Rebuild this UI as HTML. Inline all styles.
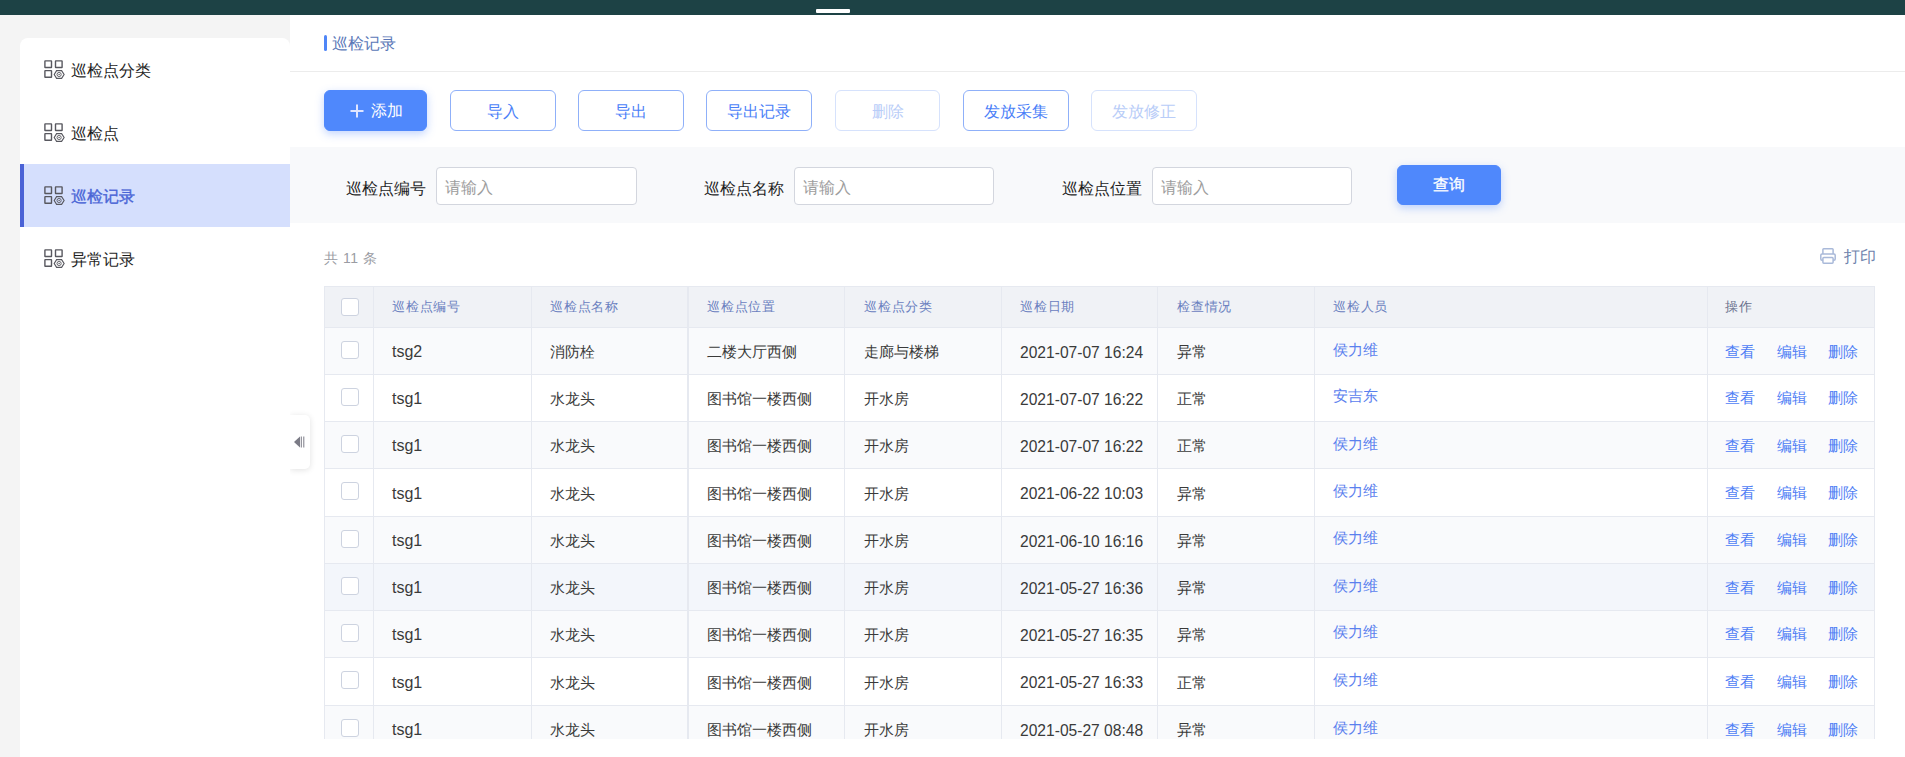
<!DOCTYPE html>
<html><head><meta charset="utf-8">
<style>
*{box-sizing:border-box;margin:0;padding:0}
html,body{width:1905px;height:757px;overflow:hidden;background:#f4f4f4;font-family:"Liberation Sans",sans-serif;color:#333}
.abs{position:absolute}
#top{left:0;top:0;width:1905px;height:15px;background:#1d4245}
#pill{left:816px;top:9px;width:34px;height:4px;border-radius:1px;background:#fff}
#side{left:20px;top:38px;width:270px;height:719px;background:#fff;border-radius:8px 8px 0 0}
.mi{position:absolute;left:0;width:270px;height:63px;font-size:16px;line-height:63px;color:#1f1f1f}
.mi .ic{position:absolute;left:24px;top:22px;width:21px;height:20px}
.mi span{position:absolute;left:51px;top:1px}
.mi.act{background:#d5dffd;color:#4a65d6;-webkit-text-stroke:0.35px #4a65d6}
.mi.act:before{content:"";position:absolute;left:0;top:0;width:4px;height:63px;background:#4a62d6}
#main{left:290px;top:15px;width:1615px;height:742px;background:#fff}
#ttl-bar{left:324px;top:35px;width:3px;height:16px;border-radius:2px;background:#4f86f7}
#ttl{left:332px;top:34px;font-size:16px;line-height:20px;color:#5b78b8}
#div{left:290px;top:71px;width:1615px;height:1px;background:#ececec}
.btn{position:absolute;top:90px;height:41px;border-radius:6px;font-size:16px;line-height:39px;padding-top:1px;text-align:center;border:1px solid #8fb0f9;color:#4b7ff8;background:#fff}
.btn.dis{border-color:#d6e2fc;color:#b9cdf8}
.btn.pri{background:#4f88fc;border-color:#4f88fc;color:#fff;box-shadow:0 3px 8px rgba(79,136,252,.35)}
#search{left:290px;top:147px;width:1615px;height:76px;background:#f8f9fb}
.lbl{position:absolute;top:178.5px;font-size:16px;line-height:20px;color:#1f1f1f}
.inp{position:absolute;top:167px;width:201px;height:38px;border:1px solid #d3d6de;border-radius:4px;background:#fff;font-size:16px;line-height:36px;padding-left:8px;padding-top:2px;color:#9d9d9d}
#total{left:324px;top:247.5px;font-size:14px;line-height:20px;color:#9a9ca3;letter-spacing:0.5px;word-spacing:0}
#print{left:1820px;top:248px;width:16px;height:16px}
#printt{left:1844px;top:246.5px;font-size:16px;line-height:20px;color:#6f83ad}
.hl{left:324px;width:1551px;height:1px;background:#e6e9f0}
.vl{top:286px;height:453px;background:#e6e9f0}
.cb{position:absolute;left:341px;width:18px;height:18px;border:1px solid #cdd3e0;border-radius:3px;background:#fff}
.th{position:absolute;top:296.5px;font-size:13px;line-height:20px;color:#6a80bf;letter-spacing:0.8px}
.th.op{color:#69708c}
.td{position:absolute;font-size:15px;line-height:20px;color:#3a3a3a;white-space:nowrap}
.td.lat{font-size:16px}
.td.date{font-size:15.6px}
.td.nm{color:#5a80ee}
.td.lk{color:#4f7ef5}
#tab{left:290px;top:415px;width:20px;height:54px;background:#fff;border-radius:0 5px 5px 0;box-shadow:0 1px 6px rgba(0,0,0,.12);clip-path:inset(-12px -12px -12px 0)}
</style></head><body>
<div class="abs" id="top"></div>
<div class="abs" id="pill"></div>
<div class="abs" id="side">
  <div class="mi" style="top:0"><svg class="ic" viewBox="0 0 21 20"><g fill="none" stroke="#58585f" stroke-width="1.4"><rect x="0.9" y="0.9" width="6.6" height="6.6" rx="0.3"/><rect x="11.5" y="0.9" width="6.6" height="6.6" rx="0.3"/><rect x="0.9" y="10.6" width="6.6" height="6.6" rx="0.3"/></g><g fill="none" stroke="#58585f"><polygon stroke-width="1.15" points="10.2,14.5 12.6,10.6 17.6,10.6 20.1,14.5 17.6,18.4 12.6,18.4"/><circle cx="15.1" cy="14.5" r="2.1" stroke-width="0.9"/></g><circle cx="15.1" cy="14.5" r="0.75" fill="#58585f"/></svg><span>巡检点分类</span></div>
  <div class="mi" style="top:63px"><svg class="ic" viewBox="0 0 21 20"><g fill="none" stroke="#58585f" stroke-width="1.4"><rect x="0.9" y="0.9" width="6.6" height="6.6" rx="0.3"/><rect x="11.5" y="0.9" width="6.6" height="6.6" rx="0.3"/><rect x="0.9" y="10.6" width="6.6" height="6.6" rx="0.3"/></g><g fill="none" stroke="#58585f"><polygon stroke-width="1.15" points="10.2,14.5 12.6,10.6 17.6,10.6 20.1,14.5 17.6,18.4 12.6,18.4"/><circle cx="15.1" cy="14.5" r="2.1" stroke-width="0.9"/></g><circle cx="15.1" cy="14.5" r="0.75" fill="#58585f"/></svg><span>巡检点</span></div>
  <div class="mi act" style="top:126px"><svg class="ic" viewBox="0 0 21 20"><g fill="none" stroke="#58585f" stroke-width="1.4"><rect x="0.9" y="0.9" width="6.6" height="6.6" rx="0.3"/><rect x="11.5" y="0.9" width="6.6" height="6.6" rx="0.3"/><rect x="0.9" y="10.6" width="6.6" height="6.6" rx="0.3"/></g><g fill="none" stroke="#58585f"><polygon stroke-width="1.15" points="10.2,14.5 12.6,10.6 17.6,10.6 20.1,14.5 17.6,18.4 12.6,18.4"/><circle cx="15.1" cy="14.5" r="2.1" stroke-width="0.9"/></g><circle cx="15.1" cy="14.5" r="0.75" fill="#58585f"/></svg><span>巡检记录</span></div>
  <div class="mi" style="top:189px"><svg class="ic" viewBox="0 0 21 20"><g fill="none" stroke="#58585f" stroke-width="1.4"><rect x="0.9" y="0.9" width="6.6" height="6.6" rx="0.3"/><rect x="11.5" y="0.9" width="6.6" height="6.6" rx="0.3"/><rect x="0.9" y="10.6" width="6.6" height="6.6" rx="0.3"/></g><g fill="none" stroke="#58585f"><polygon stroke-width="1.15" points="10.2,14.5 12.6,10.6 17.6,10.6 20.1,14.5 17.6,18.4 12.6,18.4"/><circle cx="15.1" cy="14.5" r="2.1" stroke-width="0.9"/></g><circle cx="15.1" cy="14.5" r="0.75" fill="#58585f"/></svg><span>异常记录</span></div>
</div>
<div class="abs" id="main"></div>
<div class="abs" id="ttl-bar"></div>
<div class="abs" id="ttl">巡检记录</div>
<div class="abs" id="div"></div>
<div class="btn pri" style="left:324px;width:103px"><svg style="position:absolute;left:25px;top:13px" width="14" height="14" viewBox="0 0 14 14"><path d="M7 0.5V13.5M0.5 7H13.5" stroke="#dfe5ff" stroke-width="2"/></svg><span style="position:absolute;left:46px;top:0">添加</span></div>
<div class="btn" style="left:450px;width:106px">导入</div>
<div class="btn" style="left:578px;width:106px">导出</div>
<div class="btn" style="left:706px;width:106px">导出记录</div>
<div class="btn dis" style="left:835px;width:105px">删除</div>
<div class="btn" style="left:963px;width:106px">发放采集</div>
<div class="btn dis" style="left:1091px;width:106px">发放修正</div>
<div class="abs" id="search"></div>
<div class="lbl" style="left:346px">巡检点编号</div>
<div class="inp" style="left:436px">请输入</div>
<div class="lbl" style="left:704px">巡检点名称</div>
<div class="inp" style="left:794px;width:200px">请输入</div>
<div class="lbl" style="left:1062px">巡检点位置</div>
<div class="inp" style="left:1152px;width:200px">请输入</div>
<div class="btn pri" style="left:1397px;top:165px;width:104px;height:40px;line-height:38px;padding-top:0;-webkit-text-stroke:0.3px #fff">查询</div>
<div class="abs" id="total">共 11 条</div>
<svg class="abs" id="print" viewBox="0 0 16 16"><g fill="none" stroke="#a9b9d9" stroke-width="1.5"><path d="M2.9 6V1.6Q2.9 0.8 3.7 0.8H12.3Q13.1 0.8 13.1 1.6V6"/><rect x="0.8" y="6" width="14.4" height="6.2" rx="1.2"/><rect x="2.9" y="9.6" width="10.2" height="5.6" rx="0.9" fill="#fff"/></g></svg>
<div class="abs" id="printt">打印</div>
<!--TABLE-->
<div class="abs" style="left:324px;top:286px;width:1551px;height:453px;background:#fff"></div>
<div class="abs" style="left:324px;top:287px;width:1551px;height:40px;background:#f0f2f6"></div>
<div class="abs" style="left:324px;top:328px;width:1551px;height:46px;background:#f9fafc"></div>
<div class="abs" style="left:324px;top:422px;width:1551px;height:46px;background:#f9fafc"></div>
<div class="abs" style="left:324px;top:517px;width:1551px;height:46px;background:#f9fafc"></div>
<div class="abs" style="left:324px;top:564px;width:1551px;height:46px;background:#f3f6fb"></div>
<div class="abs" style="left:324px;top:611px;width:1551px;height:46px;background:#f9fafc"></div>
<div class="abs" style="left:324px;top:706px;width:1551px;height:33px;background:#f9fafc"></div>
<div class="abs hl" style="top:286px"></div>
<div class="abs hl" style="top:327px"></div>
<div class="abs hl" style="top:374px"></div>
<div class="abs hl" style="top:421px"></div>
<div class="abs hl" style="top:468px"></div>
<div class="abs hl" style="top:516px"></div>
<div class="abs hl" style="top:563px"></div>
<div class="abs hl" style="top:610px"></div>
<div class="abs hl" style="top:657px"></div>
<div class="abs hl" style="top:705px"></div>
<div class="abs vl" style="left:324px;width:1px"></div>
<div class="abs vl" style="left:373px;width:1px"></div>
<div class="abs vl" style="left:531px;width:1px"></div>
<div class="abs vl" style="left:687px;width:2px"></div>
<div class="abs vl" style="left:844px;width:1px"></div>
<div class="abs vl" style="left:1001px;width:1px"></div>
<div class="abs vl" style="left:1157px;width:1px"></div>
<div class="abs vl" style="left:1314px;width:1px"></div>
<div class="abs vl" style="left:1707px;width:1px"></div>
<div class="abs vl" style="left:1874px;width:1px"></div>
<div class="cb" style="top:298px"></div>
<div class="th" style="left:392px">巡检点编号</div>
<div class="th" style="left:550px">巡检点名称</div>
<div class="th" style="left:707px">巡检点位置</div>
<div class="th" style="left:864px">巡检点分类</div>
<div class="th" style="left:1020px">巡检日期</div>
<div class="th" style="left:1177px">检查情况</div>
<div class="th" style="left:1333px">巡检人员</div>
<div class="th op" style="left:1725px">操作</div>
<div class="cb" style="top:341px"></div>
<div class="td lat" style="left:392px;top:342.0px">tsg2</div>
<div class="td" style="left:550px;top:342.0px">消防栓</div>
<div class="td" style="left:707px;top:342.0px">二楼大厅西侧</div>
<div class="td" style="left:864px;top:342.0px">走廊与楼梯</div>
<div class="td date" style="left:1020px;top:342.5px">2021-07-07 16:24</div>
<div class="td" style="left:1177px;top:342.0px">异常</div>
<div class="td nm" style="left:1333px;top:340px">侯力维</div>
<div class="td lk" style="left:1725px;top:342px">查看</div>
<div class="td lk" style="left:1777px;top:342px">编辑</div>
<div class="td lk" style="left:1828px;top:342px">删除</div>
<div class="cb" style="top:388px"></div>
<div class="td lat" style="left:392px;top:389.0px">tsg1</div>
<div class="td" style="left:550px;top:389.0px">水龙头</div>
<div class="td" style="left:707px;top:389.0px">图书馆一楼西侧</div>
<div class="td" style="left:864px;top:389.0px">开水房</div>
<div class="td date" style="left:1020px;top:389.5px">2021-07-07 16:22</div>
<div class="td" style="left:1177px;top:389.0px">正常</div>
<div class="td nm" style="left:1333px;top:386px">安吉东</div>
<div class="td lk" style="left:1725px;top:388px">查看</div>
<div class="td lk" style="left:1777px;top:388px">编辑</div>
<div class="td lk" style="left:1828px;top:388px">删除</div>
<div class="cb" style="top:435px"></div>
<div class="td lat" style="left:392px;top:436.0px">tsg1</div>
<div class="td" style="left:550px;top:436.0px">水龙头</div>
<div class="td" style="left:707px;top:436.0px">图书馆一楼西侧</div>
<div class="td" style="left:864px;top:436.0px">开水房</div>
<div class="td date" style="left:1020px;top:436.5px">2021-07-07 16:22</div>
<div class="td" style="left:1177px;top:436.0px">正常</div>
<div class="td nm" style="left:1333px;top:434px">侯力维</div>
<div class="td lk" style="left:1725px;top:436px">查看</div>
<div class="td lk" style="left:1777px;top:436px">编辑</div>
<div class="td lk" style="left:1828px;top:436px">删除</div>
<div class="cb" style="top:482px"></div>
<div class="td lat" style="left:392px;top:483.5px">tsg1</div>
<div class="td" style="left:550px;top:483.5px">水龙头</div>
<div class="td" style="left:707px;top:483.5px">图书馆一楼西侧</div>
<div class="td" style="left:864px;top:483.5px">开水房</div>
<div class="td date" style="left:1020px;top:484.0px">2021-06-22 10:03</div>
<div class="td" style="left:1177px;top:483.5px">异常</div>
<div class="td nm" style="left:1333px;top:481px">侯力维</div>
<div class="td lk" style="left:1725px;top:483px">查看</div>
<div class="td lk" style="left:1777px;top:483px">编辑</div>
<div class="td lk" style="left:1828px;top:483px">删除</div>
<div class="cb" style="top:530px"></div>
<div class="td lat" style="left:392px;top:531.0px">tsg1</div>
<div class="td" style="left:550px;top:531.0px">水龙头</div>
<div class="td" style="left:707px;top:531.0px">图书馆一楼西侧</div>
<div class="td" style="left:864px;top:531.0px">开水房</div>
<div class="td date" style="left:1020px;top:531.5px">2021-06-10 16:16</div>
<div class="td" style="left:1177px;top:531.0px">异常</div>
<div class="td nm" style="left:1333px;top:528px">侯力维</div>
<div class="td lk" style="left:1725px;top:530px">查看</div>
<div class="td lk" style="left:1777px;top:530px">编辑</div>
<div class="td lk" style="left:1828px;top:530px">删除</div>
<div class="cb" style="top:577px"></div>
<div class="td lat" style="left:392px;top:578.0px">tsg1</div>
<div class="td" style="left:550px;top:578.0px">水龙头</div>
<div class="td" style="left:707px;top:578.0px">图书馆一楼西侧</div>
<div class="td" style="left:864px;top:578.0px">开水房</div>
<div class="td date" style="left:1020px;top:578.5px">2021-05-27 16:36</div>
<div class="td" style="left:1177px;top:578.0px">异常</div>
<div class="td nm" style="left:1333px;top:576px">侯力维</div>
<div class="td lk" style="left:1725px;top:578px">查看</div>
<div class="td lk" style="left:1777px;top:578px">编辑</div>
<div class="td lk" style="left:1828px;top:578px">删除</div>
<div class="cb" style="top:624px"></div>
<div class="td lat" style="left:392px;top:625.0px">tsg1</div>
<div class="td" style="left:550px;top:625.0px">水龙头</div>
<div class="td" style="left:707px;top:625.0px">图书馆一楼西侧</div>
<div class="td" style="left:864px;top:625.0px">开水房</div>
<div class="td date" style="left:1020px;top:625.5px">2021-05-27 16:35</div>
<div class="td" style="left:1177px;top:625.0px">异常</div>
<div class="td nm" style="left:1333px;top:622px">侯力维</div>
<div class="td lk" style="left:1725px;top:624px">查看</div>
<div class="td lk" style="left:1777px;top:624px">编辑</div>
<div class="td lk" style="left:1828px;top:624px">删除</div>
<div class="cb" style="top:671px"></div>
<div class="td lat" style="left:392px;top:672.5px">tsg1</div>
<div class="td" style="left:550px;top:672.5px">水龙头</div>
<div class="td" style="left:707px;top:672.5px">图书馆一楼西侧</div>
<div class="td" style="left:864px;top:672.5px">开水房</div>
<div class="td date" style="left:1020px;top:673.0px">2021-05-27 16:33</div>
<div class="td" style="left:1177px;top:672.5px">正常</div>
<div class="td nm" style="left:1333px;top:670px">侯力维</div>
<div class="td lk" style="left:1725px;top:672px">查看</div>
<div class="td lk" style="left:1777px;top:672px">编辑</div>
<div class="td lk" style="left:1828px;top:672px">删除</div>
<div class="cb" style="top:719px"></div>
<div class="td lat" style="left:392px;top:720.0px">tsg1</div>
<div class="td" style="left:550px;top:720.0px">水龙头</div>
<div class="td" style="left:707px;top:720.0px">图书馆一楼西侧</div>
<div class="td" style="left:864px;top:720.0px">开水房</div>
<div class="td date" style="left:1020px;top:720.5px">2021-05-27 08:48</div>
<div class="td" style="left:1177px;top:720.0px">异常</div>
<div class="td nm" style="left:1333px;top:718px">侯力维</div>
<div class="td lk" style="left:1725px;top:720px">查看</div>
<div class="td lk" style="left:1777px;top:720px">编辑</div>
<div class="td lk" style="left:1828px;top:720px">删除</div>
<!--/TABLE-->
<div class="abs" id="tab"><svg style="position:absolute;left:3px;top:20px" width="12" height="14" viewBox="0 0 12 14"><path d="M1 7L7 1.5V12.5Z" fill="#7b7b86"/><path d="M8.3 1.5V12.5M10.8 1.5V12.5" stroke="#7b7b86" stroke-width="1"/></svg></div>
</body></html>
